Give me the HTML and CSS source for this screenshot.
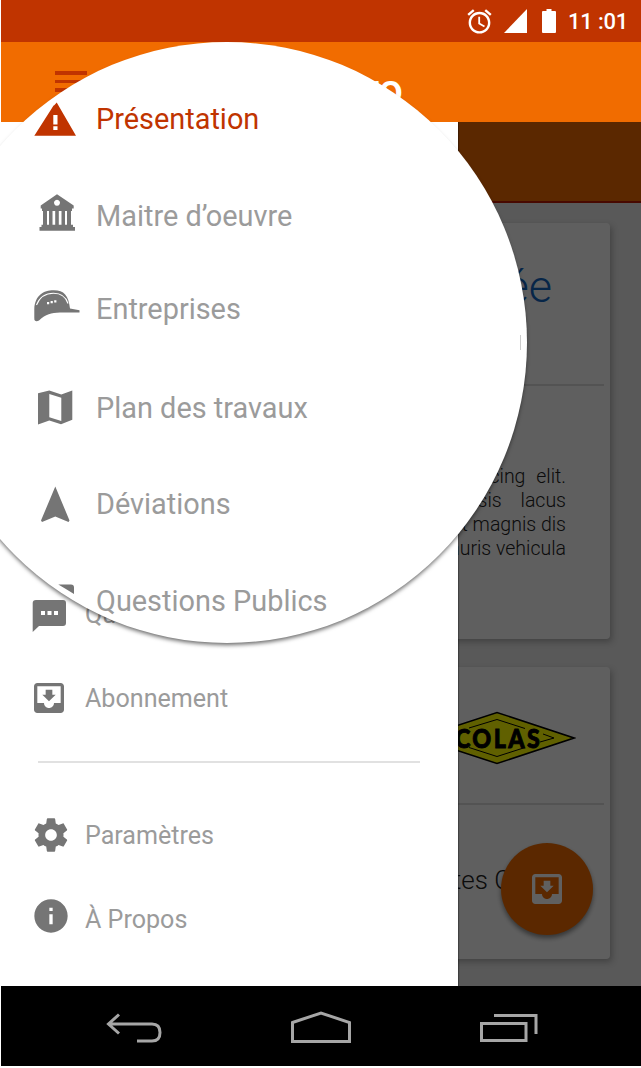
FILE: index.html
```html
<!DOCTYPE html>
<html lang="fr">
<head>
<meta charset="utf-8">
<title>Présentation</title>
<link rel="stylesheet" href="styles.css">
</head>
<body>
<div class="phone">
  <header class="status">
    <svg class="alarm" viewBox="0 0 24 24"><path d="M22 5.72l-4.6-3.86-1.29 1.53 4.6 3.86L22 5.72zM7.88 3.39L6.6 1.86 2 5.71l1.29 1.53 4.59-3.85zM12.5 8H11v6l4.75 2.85.75-1.23-4-2.37V8zM12 4c-4.97 0-9 4.03-9 9s4.02 9 9 9c4.97 0 9-4.03 9-9s-4.03-9-9-9zm0 16c-3.87 0-7-3.13-7-7s3.13-7 7-7 7 3.13 7 7-3.13 7-7 7z"/></svg>
    <svg class="signal" viewBox="0 0 23 24"><path d="M0 24L23 0V24z"/></svg>
    <svg class="battery" viewBox="0 0 14 24"><path d="M4.5 0h5v2H13q1 0 1 1v20q0 1-1 1H1q-1 0-1-1V3q0-1 1-1h3.500z"/></svg>
    <span class="clock">11 :01</span>
  </header>
  <div class="appbar">
    <div class="burger"><i></i><i></i><i></i></div>
    <div class="title">Pro</div>
  </div>
  <main class="main">
    <section class="content">
      <div class="tabs"></div>
      <article class="card card-intro">
        <h2 class="headline">ée</h2>
        <div class="rule"></div>
        <div class="copy">
          <span class="l1">cing elit.</span>
          <span class="l2">sis lacus</span>
          <span class="l3">et magnis dis</span>
          <span class="l4">mauris vehicula</span>
        </div>
      </article>
      <article class="card card-logo">
        <svg class="logo" viewBox="0 0 160 54">
          <path d="M3 27L81 1.500L158 27L81 52.500z" fill="#ff0" stroke="#000" stroke-width="1.500"/>
          <path d="M53 17L81 8.500L109 17.500M127 23L138 27L124 31M109 36.500L81 45.500L53 36.500" fill="none" stroke="#000" stroke-width="1"/>
          <g transform="translate(39 36.500) scale(.88 1)"><text>COLAS</text></g>
        </svg>
        <div class="rule"></div>
        <p class="caption">tes C</p>
      </article>
      <div class="fab"><svg viewBox="0 0 24 24"><path d="M19 3H4.990c-1.110 0-1.980.9-1.980 2L3 19c0 1.100.88 2 1.990 2H19c1.100 0 2-.9 2-2V5c0-1.100-.9-2-2-2zm0 12h-4c0 1.660-1.350 3-3 3s-3-1.340-3-3H4.990V5H19v10zm-3-5h-2V7h-4v3H8l4 4 4-4z"/></svg></div>
      <div class="scrim"></div>
    </section>
    <nav class="drawer">
      <div class="item">
        <svg class="chat" viewBox="0 0 40 48"><path d="M4 10h27q3 0 3 3v20q0 3-3 3H7L.700 42V13q0-3 3.300-3z"/><path fill="#fff" d="M9 21h4v4H9zM15.500 21h4v4h-4zM22 21h4v4h-4z"/></svg>
        <span>Qu</span>
      </div>
      <div class="item">
        <svg class="inbox" viewBox="0 0 24 24"><path d="M19 3H4.990c-1.110 0-1.980.9-1.980 2L3 19c0 1.100.88 2 1.990 2H19c1.100 0 2-.9 2-2V5c0-1.100-.9-2-2-2zm0 12h-4c0 1.660-1.350 3-3 3s-3-1.340-3-3H4.990V5H19v10zm-3-5h-2V7h-4v3H8l4 4 4-4z"/></svg>
        <span>Abonnement</span>
      </div>
      <hr class="divider">
      <div class="item">
        <svg viewBox="0 0 24 24"><path d="M19.430 12.980c.04-.32.07-.64.07-.98s-.03-.66-.07-.98l2.110-1.650c.19-.15.24-.42.12-.64l-2-3.460c-.12-.22-.39-.3-.61-.22l-2.490 1c-.52-.4-1.080-.73-1.690-.98l-.38-2.650C14.460 2.180 14.250 2 14 2h-4c-.25 0-.46.18-.49.42l-.38 2.650c-.61.25-1.170.59-1.690.98l-2.490-1c-.23-.09-.49 0-.61.22l-2 3.460c-.13.22-.07.49.12.64l2.110 1.650c-.04.32-.07.65-.07.98s.03.66.07.98l-2.110 1.650c-.19.15-.24.42-.12.64l2 3.460c.12.22.39.3.61.22l2.490-1c.52.4 1.080.73 1.690.98l.38 2.650c.03.24.24.42.49.42h4c.25 0 .46-.18.49-.42l.38-2.650c.61-.25 1.170-.59 1.690-.98l2.490 1c.23.09.49 0 .61-.22l2-3.460c.12-.22.07-.49-.12-.64l-2.110-1.650zM12 15.500c-1.930 0-3.500-1.570-3.500-3.500s1.570-3.500 3.500-3.500 3.500 1.570 3.500 3.500-1.570 3.500-3.500 3.500z"/></svg>
        <span>Paramètres</span>
      </div>
      <div class="item item-about">
        <svg class="info" viewBox="0 0 24 24"><path d="M12 2C6.480 2 2 6.480 2 12s4.480 10 10 10 10-4.480 10-10S17.520 2 12 2zm1 15h-2v-6h2v6zm0-8h-2V7h2v2z"/></svg>
        <span>À Propos</span>
      </div>
    </nav>
  </main>
  <footer class="navbar">
    <svg class="back" viewBox="0 0 56 32"><path d="M2 12H46Q54 12 54 20.500T46 29H31M13 2.500L2.500 12L13 21.500"/></svg>
    <svg class="home" viewBox="0 0 60 34"><path d="M1.500 12.500L30 3L58.500 12.500V31.500H1.500z"/></svg>
    <svg class="recent" viewBox="0 0 58 32"><path d="M1.500 11.500H46V28.500H1.500zM14 3.500H56V22"/></svg>
  </footer>

  <div class="lens">
    <ul class="lens-list">
      <li class="r1 active"><svg viewBox="0 0 48 48"><path d="M2.300 39.700L20 12Q21.500 9 22.500 9L24.700 6.500L44 39.700z"/><path fill="#fff" d="M21.300 19h4.200v9.500h-4.200zM21.300 30.200h4.200v3.900h-4.200z"/></svg><span>Présentation</span></li>
      <li class="r2"><svg viewBox="0 0 48 48"><path fill-rule="evenodd" d="M25 2.300L41.700 13.500V16.500H40V19H10V16.500H8.700V13.500zM25 7.700a3 3 0 1 0 .01 0z"/><path d="M11 18h4v15h-4zM17 18h3.500v15H17zM23.200 18h3.600v15h-3.600zM29.500 18H33v15h-3.500zM35 18h4v15h-4zM9.500 32.700h31.500V35h2v3.700H7.500V35h2z"/></svg><span>Maitre d’oeuvre</span></li>
      <li class="r3"><svg viewBox="0 0 48 48"><path d="M3.500 36Q2 35.500 2.300 33V24C3 10 12 5 22 5.200C32 5.500 36.500 10 38 23.500L47.500 25.200V27.500H28C19 28 14 29 7 35.500Q5 36.500 3.500 36z"/><path d="M4.500 20C8 11 14 8.200 21.500 8.200S34 12 36 18.500" fill="none" stroke="#fff" stroke-width="1.100"/><path fill="#fff" d="M15 17h2.200v2.200H15zM18.600 16h2.200v2.200h-2.200zM22.200 15.200h2.200v2.200h-2.200z"/></svg><span>Entreprises</span></li>
      <li class="r4"><svg viewBox="0 0 48 48"><path fill-rule="evenodd" d="M6 8.200L17.300 5.500L29.300 9.500L40.300 5.500V34.800L29 39.200L17.300 35.500L6 39.500zM17.300 8.900V32.200L29.300 36V12.800z"/></svg><span>Plan des travaux</span></li>
      <li class="r5"><svg viewBox="0 0 48 48"><path d="M23.300 5.500L37.500 39.500L36.500 41L23.300 35.500L10 41L9 39.500z"/></svg><span>Déviations</span></li>
      <li class="r6"><svg viewBox="0 0 48 48"><path d="M26.300 7.500H39Q42 7.500 42 10.500V17Q34 12 26.300 7.500z"/></svg><span>Questions Publics</span></li>
    </ul>
    <i class="lens-mark"></i>
  </div>
</div>
</body>
</html>
```
FILE: styles.css
```css
* { box-sizing: border-box; }
body { margin: 0; background: #fff; font-family: Roboto, "Liberation Sans", sans-serif; overflow: hidden; }
svg { display: block; flex: none; }
.phone { position: relative; width: 640px; height: 1068px; margin-left: 1px; }

.status { height: 42px; background: #c03400; display: flex; align-items: center; padding-left: 464px; color: #fff; }
.status svg { fill: #fff; }
.alarm { width: 29px; height: 29px; }
.signal { width: 23px; height: 24px; margin-left: 10px; }
.battery { width: 14px; height: 24px; margin-left: 15px; }
.clock { margin-left: 12px; font-size: 22px; font-weight: 500; letter-spacing: -.2px; white-space: nowrap; }

.appbar { height: 80px; background: #f16c00; display: flex; align-items: flex-start; }
.burger { display: grid; gap: 5px; width: 32px; margin: 29px 0 0 54px; }
.burger i { height: 3.500px; background: #c03400; }
.title { width: 316px; padding-top: 23px; text-align: right; color: #fff; font-size: 43px; line-height: 48px; font-weight: 500; }

.main { position: relative; height: 864px; overflow: hidden; }
.content { position: relative; height: 864px; background: #ebebeb; display: flow-root; }
.tabs { height: 81px; background: #f16c00; border-bottom: 2px solid #c01800; }
.card { width: 579px; margin-left: 30px; background: #fdfdfd; border-radius: 4px; box-shadow: 2px 3px 6px rgba(0,0,0,.25); overflow: hidden; }
.card-intro { margin-top: 20px; height: 416px; }
.card-logo { margin-top: 28px; height: 292px; }
.headline { margin: 0; padding: 37px 58px 0 0; height: 161px; text-align: right; font-size: 45px; line-height: 54px; font-weight: 300; color: #1565c0; }
.rule { height: 2px; margin: 0 6px; background: #dcdcdc; }
.copy { padding: 79px 44px 0 0; display: grid; font-size: 19.500px; line-height: 24px; font-weight: 300; color: #212121; text-align: right; }
.l1 { word-spacing: 6px; }
.l2 { word-spacing: 14px; }
.logo { width: 160px; height: 54px; margin: 44px 0 38px 385px; }
.logo text { font: 900 26.500px Lato, sans-serif; letter-spacing: 2.700px; fill: #000; stroke: #000; stroke-width: .9px; }
.caption { margin: 0; padding: 60px 0 0 422px; font-size: 26px; line-height: 30px; font-weight: 300; color: #212121; }
.fab { position: absolute; left: 500px; top: 721px; width: 92px; height: 92px; border-radius: 50%; background: #f16c00; box-shadow: 0 3px 5px rgba(0,0,0,.45); display: grid; place-items: center; }
.fab svg { width: 40px; height: 40px; fill: #fff; }
.scrim { position: absolute; inset: 0; background: rgba(0,0,0,.625); }

.drawer { position: absolute; left: 0; top: 0; width: 457px; height: 864px; padding-top: 450px; background: #fff; box-shadow: 1px 0 1px rgba(0,0,0,.3); }
.item { display: flex; align-items: center; height: 84px; padding-left: 30px; color: #9b9b9b; font-size: 25.100px; }
.item svg { width: 40px; height: 40px; fill: #757575; margin-right: 14px; }
.item .chat { height: 48px; margin-left: 1px; margin-right: 13px; }
.item .inbox { margin-left: -2px; margin-right: 16px; }
.item-about .info { margin-top: -7px; }
.divider { width: 382px; height: 2px; border: 0; margin: 21px 0 30px 37px; background: #e1e1e1; }

.navbar { height: 80px; background: #000; display: flex; align-items: center; padding-left: 105px; }
.navbar svg { fill: none; stroke: #a6a6a6; stroke-width: 3; }
.back { width: 56px; height: 32px; margin-top: 4px; }
.home { width: 60px; height: 34px; margin: 2px 0 0 129px; }
.recent { width: 58px; height: 32px; margin: 4px 0 0 129px; }

.lens { position: absolute; left: -74px; top: 42px; width: 600px; height: 601px; border-radius: 50%; background: #fff; box-shadow: 0 3px 4px -1px rgba(0,0,0,.6); clip-path: inset(0 -12px -12px 0); }
.lens-list { list-style: none; margin: 0; padding: 29px 0 0 105px; }
.lens-list li { display: flex; align-items: center; gap: 16px; color: #9b9b9b; font-size: 28.900px; white-space: nowrap; }
.lens-list svg { width: 48px; height: 48px; fill: #757575; }
.lens-list span { line-height: 34px; }
.lens-list .r1 span, .lens-list .r4 span, .lens-list .r5 span { padding-bottom: 2px; }
.lens-list .active { color: #c03400; }
.lens-list .active svg { fill: #c03400; }
.lens-list .r1 { height: 97px; }
.lens-list .r2 { height: 96px; }
.lens-list .r3 { height: 90px; }
.lens-list .r4 { height: 109px; }
.lens-list .r5 { height: 83px; }
.lens-list .r6 { height: 110px; }
.lens-mark { position: absolute; left: 593px; top: 293px; width: 1px; height: 15px; background: #ccc; }
```
